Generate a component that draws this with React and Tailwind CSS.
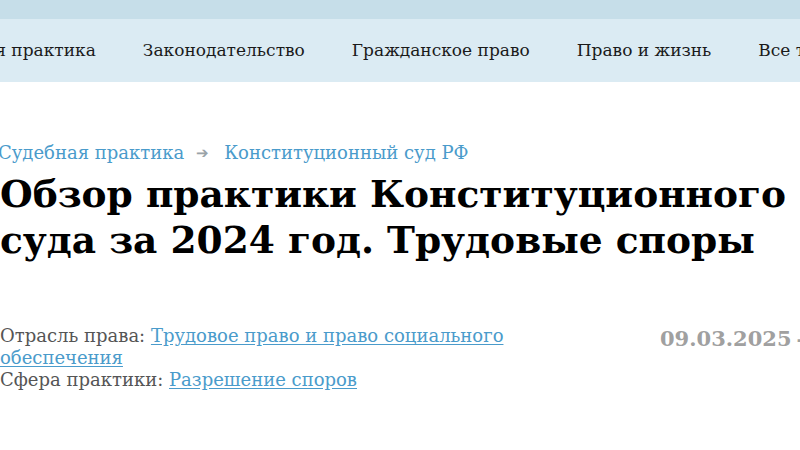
import React from 'react';

const navItems = [
  'Судебная практика',
  'Законодательство',
  'Гражданское право',
  'Право и жизнь',
  'Все темы',
];

const serif = { fontFamily: '"DejaVu Serif", Georgia, serif' };

const NavBar = () => (
  <div className="bg-[#dbebf3] h-[63px] flex items-center overflow-hidden">
    <ul className="flex items-center gap-[47px] -ml-[80px] whitespace-nowrap text-[17px] text-[#1a1a1a]">
      {navItems.map((item) => (
        <li key={item}>{item}</li>
      ))}
    </ul>
  </div>
);

const Breadcrumbs = () => (
  <div className="flex items-center text-[18px] leading-[24px] text-[#4a9bcb] -ml-[2px] whitespace-nowrap">
    <a>Судебная практика</a>
    <span className="text-[#9aa3a8] text-[15px] ml-[12px] mr-[15px]">➔</span>
    <a>Конституционный суд РФ</a>
  </div>
);

const Meta = () => (
  <div className="flex mt-[62px] text-[18px] leading-[22px]">
    <div className="w-[540px] text-[#555] shrink-0">
      <div>
        Отрасль права:{' '}
        <a className="text-[#4a9bcb] underline underline-offset-2">
          Трудовое право и право социального обеспечения
        </a>
      </div>
      <div>
        Сфера практики:{' '}
        <a className="text-[#4a9bcb] underline underline-offset-2">Разрешение споров</a>
      </div>
    </div>
    <div className="ml-[120px] mt-[2px] font-bold text-[#a0a0a0] text-[21px] leading-[24px] whitespace-nowrap shrink-0">
      09.03.2025<span className="ml-[5px]">-</span>
    </div>
  </div>
);

export default function App() {
  return (
    <div className="w-[800px] h-[450px] bg-white overflow-hidden" style={serif}>
      <div className="h-[19px] bg-[#c6dee9]" />
      <NavBar />
      <main className="pt-[59px]">
        <Breadcrumbs />
        <h1 className="mt-[6px] text-[37.5px] leading-[46px] font-bold text-black whitespace-nowrap">
          Обзор практики Конституционного
          <br />
          суда за 2024 год. Трудовые споры
        </h1>
        <Meta />
      </main>
    </div>
  );
}
